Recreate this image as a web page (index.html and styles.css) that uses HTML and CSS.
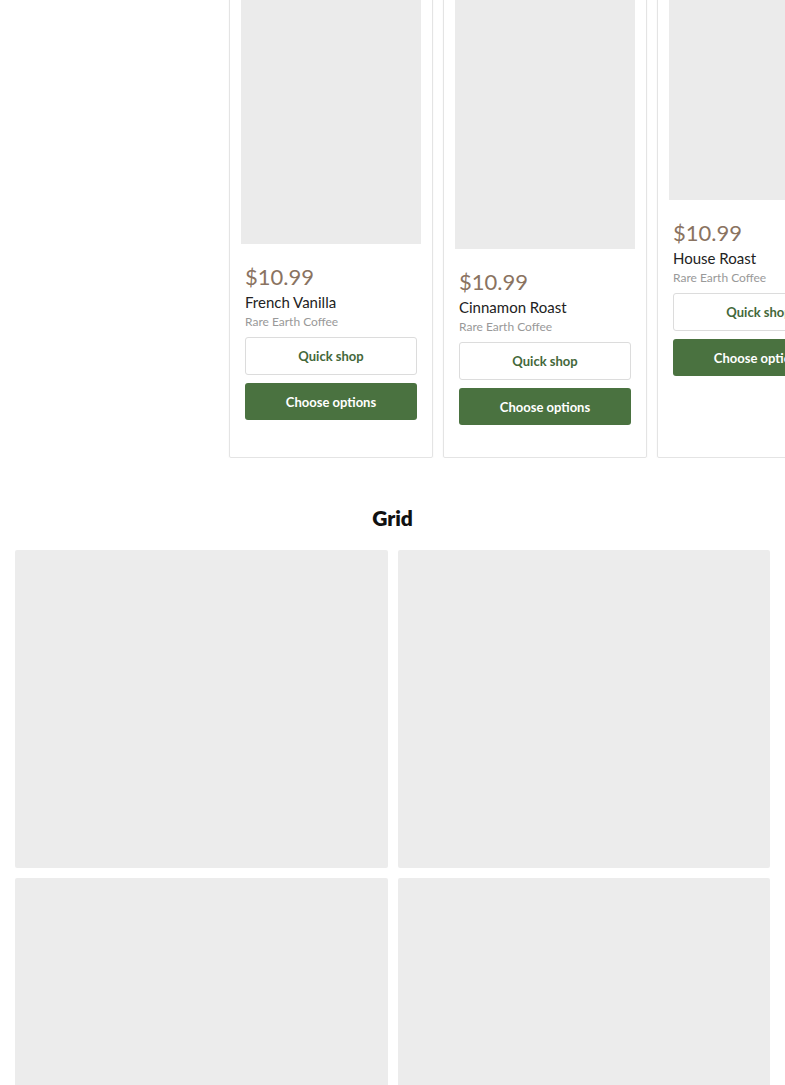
FILE: index.html
```html
<!DOCTYPE html>
<html lang="en">
<head>
    <meta charset="UTF-8">
    <meta name="viewport" content="width=device-width, initial-scale=1.0">
    <title>Rare Earth Coffee - Collection</title>
    <link rel="stylesheet" href="styles.css">
</head>
<body>

    <div class="carousel">
        <div class="card">
            <div class="card-image tall"></div>
            <div class="card-info">
                <div class="price">$10.99</div>
                <div class="title">French Vanilla</div>
                <div class="vendor">Rare Earth Coffee</div>
                <button class="btn-quick">Quick shop</button>
                <button class="btn-options">Choose options</button>
            </div>
        </div>
        <div class="card">
            <div class="card-image taller"></div>
            <div class="card-info">
                <div class="price">$10.99</div>
                <div class="title">Cinnamon Roast</div>
                <div class="vendor">Rare Earth Coffee</div>
                <button class="btn-quick">Quick shop</button>
                <button class="btn-options">Choose options</button>
            </div>
        </div>
        <div class="card">
            <div class="card-image short"></div>
            <div class="card-info">
                <div class="price">$10.99</div>
                <div class="title">House Roast</div>
                <div class="vendor">Rare Earth Coffee</div>
                <button class="btn-quick">Quick shop</button>
                <button class="btn-options">Choose options</button>
            </div>
        </div>
    </div>

    <h2 class="section-title">Grid</h2>
    <div class="grid">
        <div class="grid-item"></div>
        <div class="grid-item"></div>
        <div class="grid-item"></div>
        <div class="grid-item"></div>
    </div>

</body>
</html>
```

FILE: styles.css
```css
body {
    margin: 0;
    font-family: Lato, "Open Sans", sans-serif;
    background: #fff;
    color: #222;
}
.carousel {
    display: flex;
    align-items: stretch;
    gap: 10px;
    margin-top: -21px;
    padding-left: 229px;
    overflow: hidden;
}
.card {
    flex: 0 0 204px;
    box-sizing: border-box;
    border: 1px solid #e4e4e4;
    border-radius: 2px;
    box-shadow: 0 1px 2px rgba(0, 0, 0, 0.05);
    padding: 11px 11px 32px 11px;
}
.card-image {
    width: 180px;
    background-color: #ebebeb;
}
.card-image.tall {
    height: 253px;
}
.card-image.taller {
    height: 258px;
}
.card-image.short {
    height: 209px;
}
.card-info {
    padding: 20px 4px 0 4px;
    display: flex;
    flex-direction: column;
}
.price {
    font-size: 22px;
    line-height: 26px;
    color: #8a7361;
}
.title {
    font-size: 15px;
    line-height: 20px;
    margin-top: 2px;
    color: #222;
}
.vendor {
    font-size: 12px;
    line-height: 16px;
    margin-top: 2px;
    color: #999;
}
.btn-quick, .btn-options {
    font-family: inherit;
    font-size: 13px;
    font-weight: 700;
    border-radius: 3px;
    cursor: pointer;
    width: 100%;
}
.btn-quick {
    margin-top: 7px;
    height: 38px;
    background: #fff;
    color: #44683a;
    border: 1px solid #dcdcdc;
}
.btn-options {
    margin-top: 8px;
    height: 37px;
    background: #4a7240;
    color: #fff;
    border: none;
}
.section-title {
    text-align: center;
    font-size: 21px;
    font-weight: 800;
    line-height: 28px;
    margin: 46px 0 18px 0;
    color: #111;
}
.grid {
    display: grid;
    grid-template-columns: 1fr 1fr;
    gap: 10px;
    padding: 0 15px;
}
.grid-item {
    height: 318px;
    background-color: #ececec;
    border-radius: 2px;
}
```
